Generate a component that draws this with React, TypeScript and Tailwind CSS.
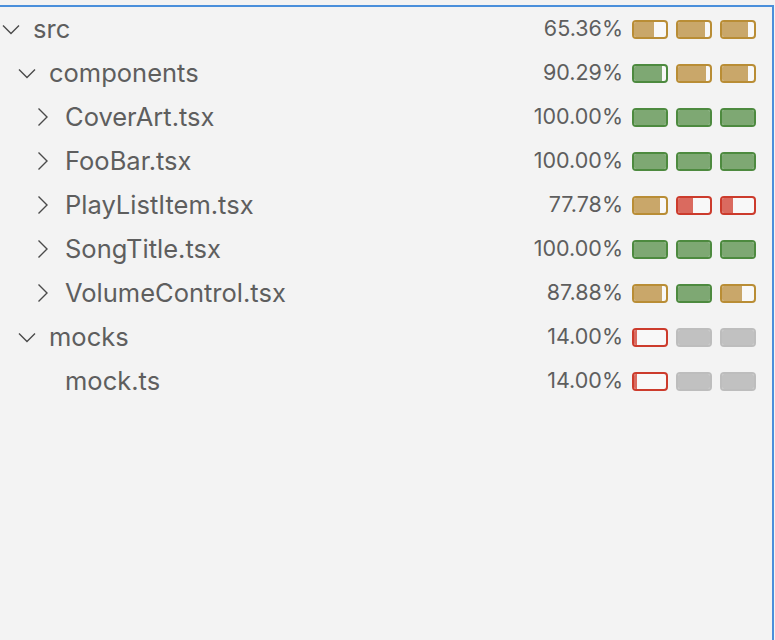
import React from 'react';

type Tone = 'gold' | 'green' | 'red' | 'gray';

interface Row {
  name: string;
  level: number;
  kind: 'open' | 'closed' | 'leaf';
  pct: string;
  bars: [Tone, number][];
}

const ROWS: Row[] = [
  { name: 'src', level: 0, kind: 'open', pct: '65.36%', bars: [['gold', 62], ['gold', 84], ['gold', 80]] },
  { name: 'components', level: 1, kind: 'open', pct: '90.29%', bars: [['green', 88], ['gold', 86], ['gold', 80]] },
  { name: 'CoverArt.tsx', level: 2, kind: 'closed', pct: '100.00%', bars: [['green', 100], ['green', 100], ['green', 100]] },
  { name: 'FooBar.tsx', level: 2, kind: 'closed', pct: '100.00%', bars: [['green', 100], ['green', 100], ['green', 100]] },
  { name: 'PlayListItem.tsx', level: 2, kind: 'closed', pct: '77.78%', bars: [['gold', 80], ['red', 48], ['red', 35]] },
  { name: 'SongTitle.tsx', level: 2, kind: 'closed', pct: '100.00%', bars: [['green', 100], ['green', 100], ['green', 100]] },
  { name: 'VolumeControl.tsx', level: 2, kind: 'closed', pct: '87.88%', bars: [['gold', 88], ['green', 100], ['gold', 62]] },
  { name: 'mocks', level: 1, kind: 'open', pct: '14.00%', bars: [['red', 8], ['gray', 100], ['gray', 100]] },
  { name: 'mock.ts', level: 2, kind: 'leaf', pct: '14.00%', bars: [['red', 8], ['gray', 100], ['gray', 100]] },
];

const TONE: Record<Tone, { border: string; fill: string }> = {
  gold: { border: 'border-[#b98d35]', fill: 'bg-[#c9a76a]' },
  green: { border: 'border-[#4d8a3f]', fill: 'bg-[#7ea873]' },
  red: { border: 'border-[#cc3b2c]', fill: 'bg-[#da6a5f]' },
  gray: { border: 'border-[#bdbdbd]', fill: 'bg-[#c1c1c1]' },
};

const INDENT = ['pl-[2px]', 'pl-[18px]', 'pl-[34px]'];

function Chevron({ kind }: { kind: Row['kind'] }) {
  if (kind === 'leaf') return <span className="w-[18px] h-[20px] shrink-0" />;
  return (
    <svg width="18" height="20" viewBox="0 0 18 20" className="shrink-0" fill="none" stroke="#4a4a4a" strokeWidth="1.4">
      {kind === 'open' ? <path d="M1 6.5 L9 14.5 L17 6.5" /> : <path d="M4.5 1.5 L13 10 L4.5 18.5" />}
    </svg>
  );
}

function Bar({ tone, value }: { tone: Tone; value: number }) {
  const t = TONE[tone];
  return (
    <div className={`w-[36px] h-[19px] rounded-[4px] border-2 ${t.border} bg-[#f8f8f8] overflow-hidden`}>
      <div className={`h-full ${t.fill}`} style={{ width: `${value}%` }} />
    </div>
  );
}

export default function App() {
  return (
    <div className="w-[775px] h-[640px] bg-[#f3f3f3] pt-[6px] overflow-hidden" style={{ fontFamily: 'Inter, "Noto Sans", sans-serif' }}>
      <div className="w-[774px] h-[640px] border-t-2 border-r-2 border-[#4a8fdb] pr-[16px] -mt-px">
        {ROWS.map((row) => (
          <div key={row.name + row.level} className="flex items-center h-[44px]">
            <div className={`flex items-center flex-1 ${INDENT[row.level]}`}>
              <Chevron kind={row.kind} />
              <span className="ml-[13px] text-[25.5px] text-[#5e5e5e] leading-none">{row.name}</span>
            </div>
            <span className="text-[21.5px] text-[#5e5e5e] leading-none mr-[9px]">{row.pct}</span>
            <div className="flex gap-[8px]">
              {row.bars.map(([tone, v], i) => (
                <Bar key={i} tone={tone} value={v} />
              ))}
            </div>
          </div>
        ))}
      </div>
    </div>
  );
}
